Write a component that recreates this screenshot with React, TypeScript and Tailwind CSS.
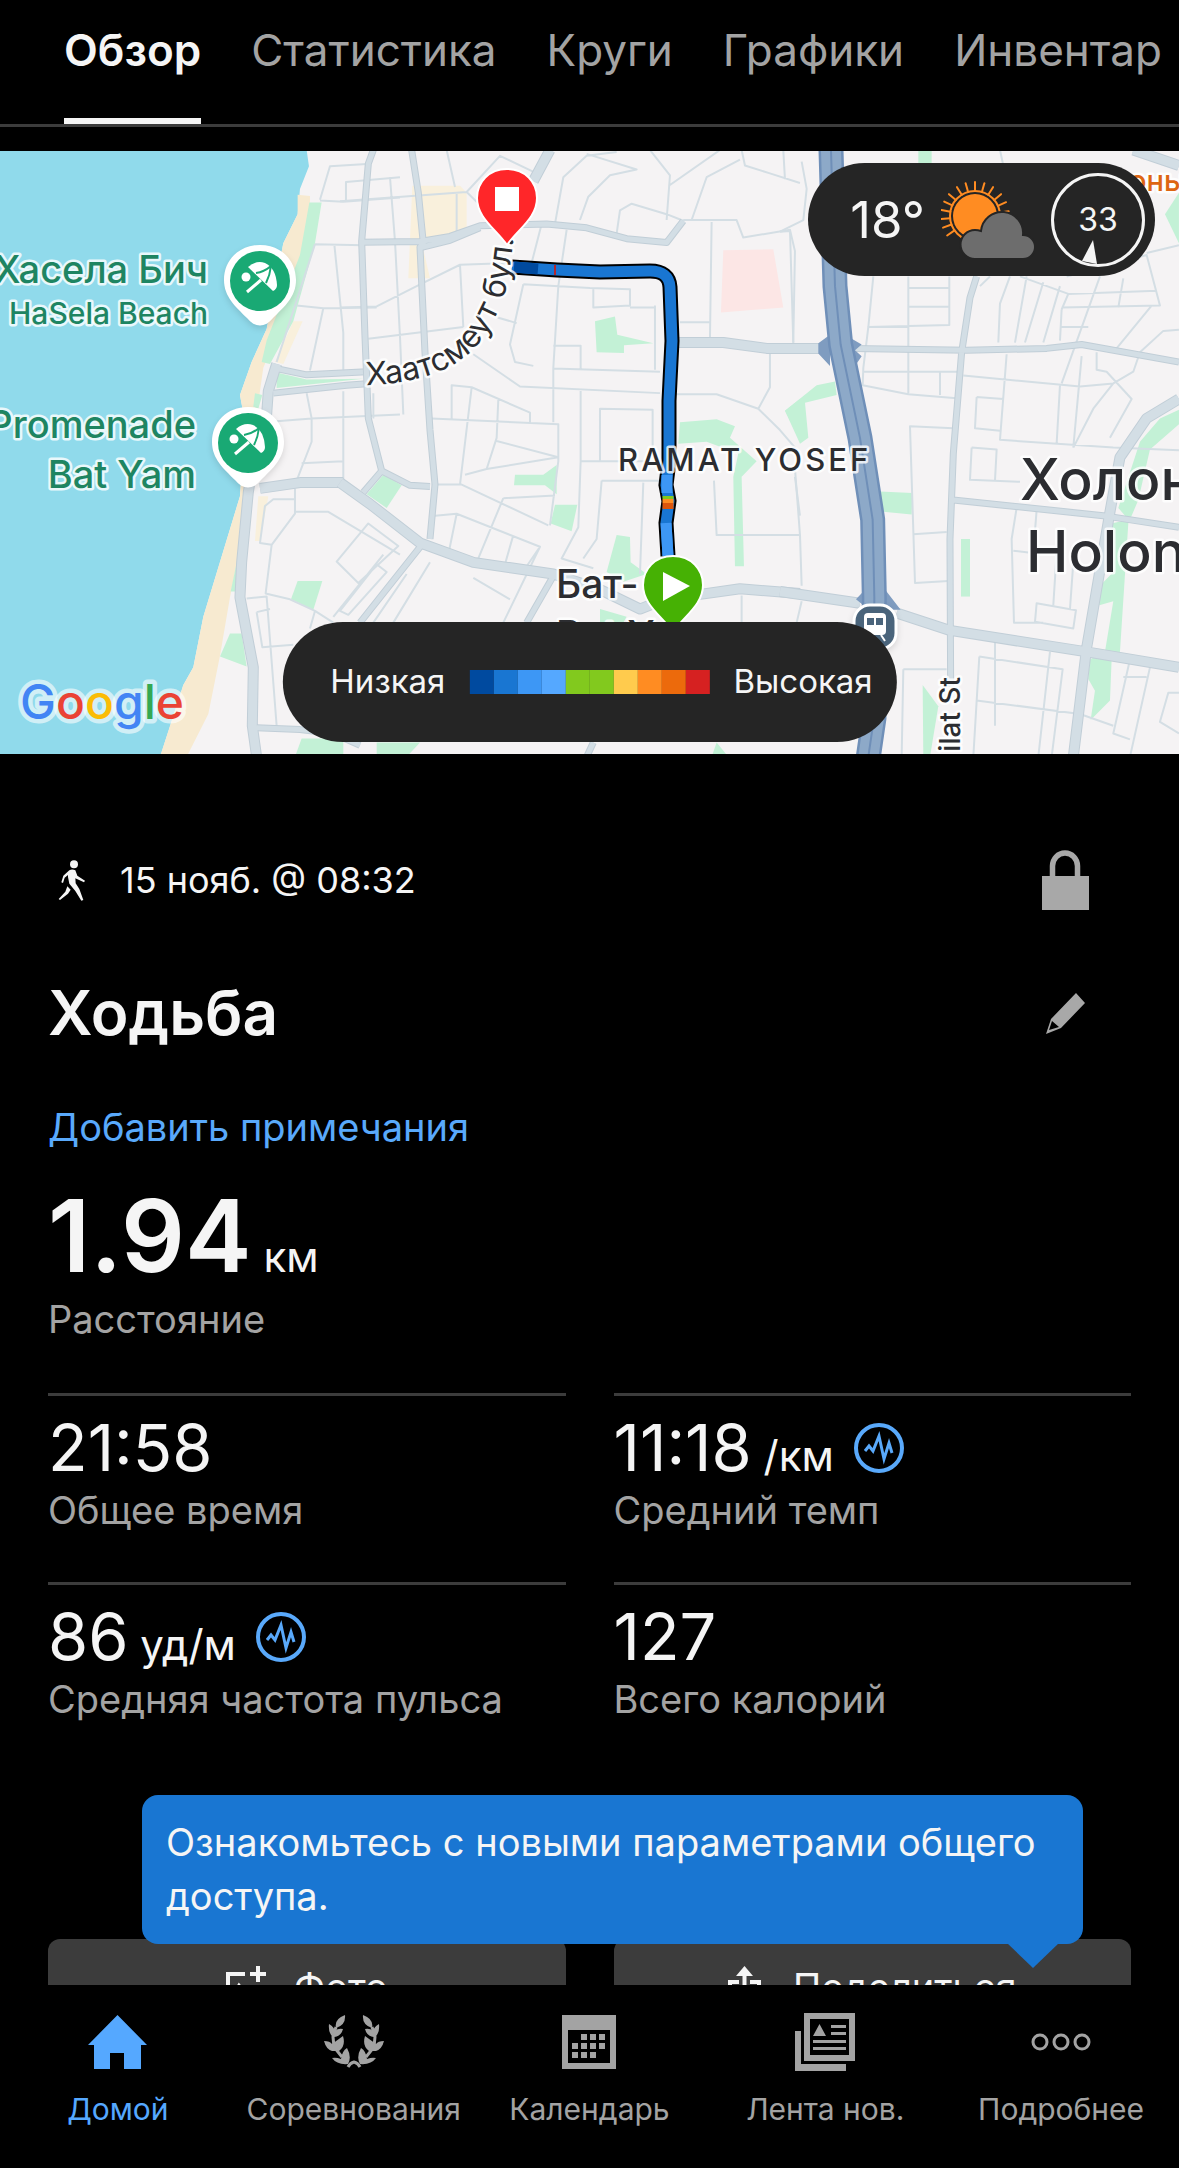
import type { ReactNode } from "react";

const TABS = ["Обзор", "Статистика", "Круги", "Графики", "Инвентар"];

const ZONES = [
  "bg-[#004a9f]",
  "bg-[#1976d2]",
  "bg-[#3d97f5]",
  "bg-[#55a8ff]",
  "bg-[#82c91e]",
  "bg-[#82c91e]",
  "bg-[#ffcb4d]",
  "bg-[#ff8c22]",
  "bg-[#ec6a0c]",
  "bg-[#d62121]",
];

/* ---------- Map drawing ---------- */

type TileProps = {
  x: number;
  fills: [string, string][];
  minor: string;
  major: string;
  wide?: string;
};

function Tile({ x, fills, minor, major, wide }: TileProps) {
  return (
    <g
      transform={`translate(${x} -1) scale(0.3333 0.389)`}
      fill="none"
      strokeLinejoin="round"
    >
      {fills.map(([color, points], i) => (
        <polygon key={i} points={points} fill={color} />
      ))}
      <path d={minor} stroke="#d4dee4" strokeWidth="2" vectorEffect="non-scaling-stroke" />
      <path d={major} stroke="#c1ced7" strokeWidth="7" vectorEffect="non-scaling-stroke" />
      {wide && <path d={wide} stroke="#c1ced7" strokeWidth="11" vectorEffect="non-scaling-stroke" />}
      <path d={major} stroke="#d3dee5" strokeWidth="5" vectorEffect="non-scaling-stroke" />
      {wide && <path d={wide} stroke="#d3dee5" strokeWidth="9" vectorEffect="non-scaling-stroke" />}
    </g>
  );
}

const WATER = "#90daeb";
const SAND = "#f7ead0";
const GREEN = "#c3f1d6";
const YELLOW = "#f9f0dc";

const COAST: TileProps = {
  x: 0,
  fills: [
    [WATER, "0,0 920,0 927,42 900,100 893,165 850,240 800,460 755,545 720,630 735,700 720,890 610,1200 580,1330 550,1375 483,1553 0,1560"],
    [SAND, "893,115 930,118 930,215 870,400 790,560 775,650 745,860 730,980 690,1150 660,1300 625,1450 560,1560 480,1560 550,1375 580,1330 610,1200 720,890 735,700 720,630 755,545 800,460 850,240 893,165"],
    [YELLOW, "880,440 908,440 850,550 825,545"],
    [YELLOW, "775,890 805,890 780,1005 765,1005"],
    [GREEN, "928,135 965,135 945,240 880,440 810,550 785,545 800,490 900,270"],
    [GREEN, "765,625 787,630 775,665 760,660"],
    [GREEN, "830,572 920,590 1090,588 830,612"],
    [GREEN, "893,1108 967,1108 940,1182 873,1155"],
    [GREEN, "690,1243 725,1243 740,1328 660,1302"],
    [GREEN, "735,880 745,880 705,1135 692,1135 725,1000"],
    [GREEN, "905,1513 1030,1513 1030,1560 885,1560"],
  ],
  minor:
    "M960 128L990 42 1100 36M960 130L1030 133 1200 122M1038 130V82L1200 70M945 242L1090 245M1003 242L1030 470V565M890 400L970 407 1130 405M970 407L930 567M945 242L870 440 830 545M920 625L935 690V750L890 850M830 697L935 690 1200 680M1030 620V850M905 805L1030 800M885 870V935L815 1015 780 1010 795 915 820 898H885M885 930H985L1200 1040M815 1015L797 1140 870 1155 945 1185 1000 1215M1010 1058L1105 960 1195 1018 1075 1113ZM740 1153L800 1148 830 1480M770 1188L810 1180M770 1188L787 1278 880 1272M1000 1200L1150 1040M1020 1185L1130 1065 1160 1085 1045 1195ZM945 1185L930 1230",
  major: "M830 562L920 578 1100 570M820 625L1040 605 1110 600M770 1485L900 1490 1000 1500 1080 1530",
  wide: "M830 550L805 620 800 680 760 800 745 880 725 1060 720 1150 760 1330 757 1480 770 1560M780 870L900 855 1030 855",
};

const CENTER: TileProps = {
  x: 340,
  fills: [
    [YELLOW, "217,92 360,92 380,110 380,215 250,255 270,330 205,330"],
    ["#fce6e5", "1150,258 1300,255 1330,405 1143,418"],
    [GREEN, "765,440 825,428 832,475 940,497 852,502 852,522 770,520"],
    [GREEN, "525,835 610,835 650,810 650,885 615,862 522,862"],
    [GREEN, "645,912 712,912 695,980 632,960"],
    [GREEN, "830,990 870,995 872,1060 920,1090 850,1110 800,1085"],
    [GREEN, "1020,700 1130,692 1185,710 1170,740 1250,800 1205,840 1212,1070 1185,1070 1180,840 1195,780 1100,750 1015,755"],
    [GREEN, "1335,670 1380,640 1380,745"],
    [GREEN, "80,885 130,835 185,862 140,920"],
    [GREEN, "110,1523 240,1523 200,1560 110,1560"],
    [GREEN, "1130,1523 1165,1560 1115,1560"],
    [GREEN, "780,1180 860,1200 850,1215 780,1215"],
  ],
  minor:
    "M0 132L380 108 430 150M380 108L480 15 590 60M150 70L165 235 180 480 190 680M350 108V215M320 0L345 95M645 190L670 70 740 15 830 5M720 180L745 120 810 65 890 50 740 10M930 0L990 65 980 180M990 90L1140 0M1055 180L1100 70 1200 25M1205 0L1215 40 1290 60 1380 85M1330 0L1335 75M830 215L840 155 875 138 980 165 1030 182M1030 180L1190 180 1210 225 1350 205 1365 260 1360 495M1115 185L1110 485M605 190L575 290M680 205L655 350 640 560M550 345L750 355 870 358V400L760 405V355M550 345L510 500 525 545 580 555M640 503H722V562M640 562L960 570M640 560V700M945 400V565M945 405H870M400 525L540 608 960 625M722 615V800M722 800H960M780 800V665L938 668V765M1010 628H1130L1255 665 1320 720 1380 780M1255 665L1290 610V520M1020 443H1110M335 690V605L395 610 570 675V700M275 690L655 705V800L630 965M395 610L360 860M475 640L470 740 440 820 375 835M470 748L655 790 440 820M275 860H365L625 965M285 940L350 935 600 1020 560 1070M490 895L645 888M490 895L410 1060M350 935L325 1040M520 990L490 1080M722 800L715 970 665 1050 760 1075M785 850H960M785 850L770 1000 730 1050M910 855L900 1090M1122 850L1130 990H1380M1205 1145V1215M270 1060L160 1215M400 1100L510 1155M600 1020L490 1215M85 485L370 455M360 295L370 455M0 405L110 402 230 350 360 295 520 290M470 430L530 445M100 690V625M200 1090L100 1215M1365 840L1380 940",
  major:
    "M100 0L85 35 65 235 75 480 85 690 125 825 210 862 270 865M125 825L70 880M215 0L235 110 250 240 240 250 255 520 270 720 285 860 270 1000M65 237L240 235 330 222 420 195 620 190 740 200 860 228 980 238 1030 182M245 250L330 232 420 200M250 1010L60 1215M640 1095L560 1215M760 1523L740 1560",
  wide: "M630 0L580 80M0 855L90 910 240 1010 400 1060 640 1090 780 1130M780 1130L900 1180 960 1160M1010 495L1150 495 1280 510 1380 510M1060 1145L1200 1128 1380 1140",
};

const EAST: TileProps = {
  x: 780,
  fills: [
    [GREEN, "415,0 455,0 455,40 415,40"],
    [GREEN, "15,670 110,605 165,595 170,630 75,650 85,740 60,755"],
    [GREEN, "300,878 397,882 395,937 310,930"],
    [GREEN, "543,1000 570,1000 570,1148 543,1148"],
    [GREEN, "1197,668 1140,690 1080,750 1015,920 1045,950 995,960 1000,1085 960,1120 958,1170 1000,1160 975,1290 930,1310 925,1360 945,1390 932,1465 990,1415 995,1310 1020,1290 1045,960 1075,900 1110,770 1197,705"],
    [GREEN, "1155,165 1197,110 1197,240"],
    [GREEN, "428,1375 475,1430 450,1560 430,1560"],
  ],
  minor:
    "M385 325V625M385 355H508M385 403H508M508 325V450L265 455M280 325L265 455 250 560 248 605 385 628 530 638M250 570H535M480 570V630M600 350L630 325M690 325L660 395 655 495M740 325L705 495M790 340L735 495M840 350L790 495M720 325L865 370 1130 362M960 325L845 600M845 405L1140 400 1100 270 860 325M845 410L840 490M845 455H925M865 370L845 410M1030 330L1015 405M1115 400L1000 520M950 520V565L980 570 1055 640 990 740M550 580L900 608 1000 600 1060 570 1080 520 1150 465 1197 462M905 530L880 765M840 605L830 755M1000 600L940 665 880 765M680 525L660 745 1000 765 1197 772M590 635L670 640M590 635L585 715 660 722M575 765L650 770 645 850M575 765L570 848 720 853M520 715L390 710 405 1113 505 1108M400 988L500 982M710 920L695 1000 702 1215 790 1215M770 925L760 1035M700 1030L745 1035M830 1035L820 1170M770 1165L888 1183 880 1230 765 1213ZM880 1060L870 1180M598 1302L848 1335 815 1560M598 1302L580 1560M645 1265V1480M590 1415L900 1450 1000 1480M810 1290L775 1560M370 1335H500M370 1335L365 1560M1050 1310L1000 1500 1050 1515M1030 1355H1100M1110 1330L1050 1560M1197 1395L1165 1395 1140 1470 1197 1500M60 990L65 1120M45 820L60 990M0 210L30 208 40 500M65 30L80 100 70 180 0 210M65 1160L50 1215M660 0L670 40M1100 265L1197 245",
  major:
    "M220 510L560 515 800 510 905 500 1197 545M590 325L570 380 545 520 520 780 510 1000 512 1380M520 900L970 940 1197 970",
  wide: "M0 510H150M990 930L920 1280 880 1560M990 930L1020 790 1100 690 1197 640M0 1135L240 1165M350 1190L510 1235 920 1290 1197 1330M1060 0L1197 40",
};

const HIGHWAY = "M153 0L165 350 182 500 240 740 278 950 283 1150 282 1460 265 1560";
const ROUTE =
  "M512 116L557 119 600 121 650 120Q669 120 670 136L672 190 669 250 669 310 666 334 669 350 666 372 668 405";

function BeachPin({ x, y }: { x: number; y: number }) {
  return (
    <g transform={`translate(${x} ${y})`}>
      <path
        d="M0 -36C21 -36 36 -21 36 -1C36 16 24 26 13 37C5 47 -5 47 -13 37C-24 26 -36 16 -36 -1C-36 -21 -21 -36 0 -36Z"
        fill="#fff"
        className="drop-shadow-md"
      />
      <circle r="30" fill="#19a974" />
      <circle cx="-14" cy="-4" r="4.500" fill="#fff" />
      <path d="M-12 -14Q-4 -21 5 -18Q16 -13 17 4Q17 8 13 10Z" fill="#fff" />
      <path d="M-13 11L1 -1" stroke="#fff" strokeWidth="3" />
      <path d="M-4 -8Q4 -9 11 -15Q10 -6 6 2" fill="none" stroke="#19a974" strokeWidth="2" />
    </g>
  );
}

function RoutePin({ x, y, color, children }: { x: number; y: number; color: string; children: ReactNode }) {
  return (
    <g transform={`translate(${x} ${y})`}>
      <path
        d="M0 -30C18 -30 30 -17 30 -1C30 19 11 30 0 46C-11 30 -30 19 -30 -1C-30 -17 -18 -30 0 -30Z"
        fill={color}
        stroke="#fff"
        strokeWidth="2"
      />
      {children}
    </g>
  );
}

const halo = "[paint-order:stroke] stroke-white/80 stroke-[5px] [stroke-linejoin:round]";

function RouteMap() {
  return (
    <svg
      viewBox="0 0 1179 603"
      preserveAspectRatio="xMidYMid slice"
      className="block w-full font-[Inter,sans-serif]"
      role="img"
      aria-label="Карта маршрута"
    >
      <rect width="1179" height="603" fill="#f5f3f4" />
      <Tile {...COAST} />
      <Tile {...CENTER} />
      <Tile {...EAST} />
      <g transform="translate(780 -1) scale(0.3333 0.389)" fill="none">
        <path
          d="M115 497L150 475V555L115 523ZM205 480L245 500L225 515L245 530L225 555L205 540ZM228 1155L250 1135V1170ZM315 1130L362 1182H310Z"
          fill="#7f9cc0"
        />
        <path d={HIGHWAY} stroke="#6f8fb8" strokeWidth="25" vectorEffect="non-scaling-stroke" />
        <path d={HIGHWAY} stroke="#8da9c8" strokeWidth="20" vectorEffect="non-scaling-stroke" />
        <path d={HIGHWAY} stroke="#6f8fb8" strokeWidth="2" vectorEffect="non-scaling-stroke" />
      </g>

      <g fill="none">
        <path d={ROUTE} stroke="#000" strokeWidth="15" />
        <path d={ROUTE} stroke="#1976d2" strokeWidth="11" />
        <path d="M514 116L538 118" stroke="#004a9f" strokeWidth="11" />
        <path d="M555 114v10" stroke="#b3262e" strokeWidth="2" />
        <path d="M666 372L668 405M667 324L667 342" stroke="#3d97f5" strokeWidth="11" />
        <path d="M668 345v3" stroke="#82c91e" strokeWidth="11" />
        <path d="M668 348v4" stroke="#ff8c22" strokeWidth="11" />
        <path d="M668 352v6" stroke="#dd560c" strokeWidth="11" />
      </g>

      <g fill="#1e8562" fontWeight="500" textAnchor="end" className={halo}>
        <text x="208" y="132" fontSize="38">Хасела Бич</text>
        <text x="208" y="173" fontSize="30">HaSela Beach</text>
        <text x="196" y="287" fontSize="38">Promenade</text>
        <text x="196" y="337" fontSize="38">Bat Yam</text>
      </g>

      <g fill="#2c2d31" className={halo}>
        <path id="street" d="M366 234C432 232 470 212 490 176S508 128 516 70" fill="none" stroke="none" />
        <text fontSize="32"><textPath href="#street">Хаатсмеут бул.</textPath></text>
        <text x="618" y="320" fontSize="31" fontWeight="500" className="tracking-widest">RAMAT YOSEF</text>
        <text x="556" y="447" fontSize="39" fontWeight="500">Бат-</text>
        <text x="556" y="498" fontSize="39" fontWeight="500">Bat Yam</text>
        <text x="1020" y="349" fontSize="57" fontWeight="500">Холон</text>
        <text x="1026" y="421" fontSize="57" fontWeight="500">Holon</text>
        <text transform="translate(960 526) rotate(-90)" textAnchor="end" fontSize="28" fontWeight="500">ilat St</text>
      </g>
      <text x="1129" y="40" fontSize="29" fontWeight="500" fill="#dd6512" className={halo}>оны</text>

      <BeachPin x={260} y={130} />
      <BeachPin x={248} y={292} />

      <RoutePin x={507} y={48} color="#ff2629">
        <rect x="-12" y="-12" width="24" height="24" fill="#fff" />
      </RoutePin>
      <RoutePin x={673} y={435} color="#46b104">
        <path d="M-10 -14V15L17 0Z" fill="#fff" />
      </RoutePin>

      <g transform="translate(875 474)">
        <rect x="-21" y="-20" width="42" height="44" rx="16" fill="#4a647b" stroke="#fff" strokeWidth="3" className="drop-shadow-md" />
        <rect x="-11" y="-12" width="22" height="22" rx="4" fill="#fff" />
        <path d="M-8 -7h7v7h-7zM1 -7h7v7h-7z" fill="#4a647b" />
        <path d="M-6 10L-10 16M6 10L10 16" stroke="#fff" strokeWidth="2" />
      </g>

      <g fontSize="48" fontWeight="500" className="[paint-order:stroke] stroke-white/60 stroke-[9px] [stroke-linejoin:round]">
        <text x="20" y="568">
          <tspan fill="#4285f4">G</tspan>
          <tspan fill="#ea4335">o</tspan>
          <tspan fill="#fbbc05">o</tspan>
          <tspan fill="#4285f4">g</tspan>
          <tspan fill="#34a853">l</tspan>
          <tspan fill="#ea4335">e</tspan>
        </text>
      </g>
    </svg>
  );
}

/* ---------- Icons ---------- */

const RAYS = [-200, -185, -170, -155, -140, -122, -106, -90, -74, -58, -40, -24, -8, 145];

function WeatherIcon() {
  return (
    <svg width="94" height="78" viewBox="0 0 94 78" aria-hidden="true">
      <g stroke="#ff8c22" strokeWidth="2" strokeLinecap="round">
        {RAYS.map((a) => (
          <path key={a} d="M25 0H34" transform={`translate(34 35) rotate(${a})`} />
        ))}
        <circle cx="34" cy="35" r="25" fill="none" />
      </g>
      <circle cx="34" cy="35" r="22" fill="#ff8c22" />
      <path
        d="M34 78A14 14 0 0 1 34 49Q37 49 40 50A21 21 0 0 1 82 54A12 12 0 0 1 82 78Z"
        fill="#6d6d6d"
        stroke="#252525"
        strokeWidth="2"
      />
    </svg>
  );
}

function WalkIcon() {
  return (
    <svg width="28" height="42" viewBox="54 40 84 126" fill="#f5f5f5" aria-hidden="true">
      <circle cx="102" cy="56" r="12" />
      <path d="M88 74Q96 69 106 74L112 90L135 105L132 110L106 98L107 113L118 130L130 163L124 165L106 136L88 114L84 94L84 88L74 96L69 112L64 110L70 90Z" />
      <path d="M82 122L92 132L84 144L60 163L56 160L76 138Z" />
    </svg>
  );
}

function LockIcon() {
  return (
    <svg width="47" height="60" viewBox="0 0 47 60" aria-hidden="true">
      <rect y="26" width="47" height="34" fill="#a8a8a8" />
      <path d="M10.500 28V16a12.500 13 0 0 1 25 0V28" fill="none" stroke="#a8a8a8" strokeWidth="5.500" />
    </svg>
  );
}

function PencilIcon() {
  return (
    <svg width="39" height="41" viewBox="0 0 39 41" aria-hidden="true">
      <path d="M30 0L39 10L15 35L0 41L5 26ZM6 28L3 37L13 34Z" fill="#a8a8a8" fillRule="evenodd" />
    </svg>
  );
}

function PulseIcon() {
  return (
    <svg width="50" height="50" viewBox="0 0 50 50" fill="none" stroke="#59a9fb" aria-hidden="true">
      <circle cx="25" cy="25" r="23" strokeWidth="4" />
      <path d="M11 28L15 23L19 28L25 13L30 36L35 20L38 30" strokeWidth="3" />
    </svg>
  );
}

function PhotoIcon() {
  return (
    <svg width="40" height="42" viewBox="0 0 40 42" fill="none" stroke="#f5f5f5" strokeWidth="4" aria-hidden="true">
      <path d="M19 8H2V40H34V24M32 0V16M24 8H40M4 34L13 20L21 30L25 26L33 36" />
    </svg>
  );
}

function ShareIcon() {
  return (
    <svg width="33" height="42" viewBox="0 0 33 42" fill="none" stroke="#f5f5f5" strokeWidth="4" aria-hidden="true">
      <path d="M11 16H2V40H31V16H22M16.500 30V6" />
      <path d="M16.500 0L25 10H8Z" fill="#f5f5f5" stroke="none" />
    </svg>
  );
}

function HomeIcon() {
  return (
    <svg width="59" height="54" viewBox="0 0 59 54" fill="currentColor" aria-hidden="true">
      <path d="M29.500 0L59 30H53V54H36V38H22V54H6V30H0Z" />
    </svg>
  );
}

const LAUREL =
  "M21 0Q22 10 12 13Q10 4 21 0ZM5 9Q10 12 11 16Q14 13 19 14Q17 22 9 22Q4 18 5 9ZM0 26Q6 26 8 29L19 21Q22 31 15 36H8Q2 34 0 26ZM23 33Q28 42 24 49Q13 50 8 43Q12 42 17 44Q18 36 23 33Z";

function LaurelIcon() {
  return (
    <svg width="60" height="54" viewBox="0 0 60 54" fill="currentColor" aria-hidden="true">
      <path d={LAUREL} />
      <path d={LAUREL} transform="matrix(-1 0 0 1 60 0)" />
      <path
        d="M12 12L9 22L10 32L18 42M48 12L51 22L50 32L42 42M24 52Q26 48 30 47Q34 48 36 52"
        fill="none"
        stroke="currentColor"
        strokeWidth="3"
      />
    </svg>
  );
}

function CalendarIcon() {
  return (
    <svg width="54" height="54" viewBox="0 0 54 54" fill="currentColor" aria-hidden="true">
      <path d="M0 0H54V54H0ZM6 15V48H48V15Z" fillRule="evenodd" />
      <path d="M19 19h6v6h-6zM28 19h6v6h-6zM37 19h6v6h-6zM10 28h6v6h-6zM19 28h6v6h-6zM28 28h6v6h-6zM37 28h6v6h-6zM10 37h6v6h-6zM19 37h6v6h-6zM28 37h6v6h-6z" />
    </svg>
  );
}

function NewsIcon() {
  return (
    <svg width="60" height="58" viewBox="0 0 60 58" fill="currentColor" aria-hidden="true">
      <path d="M9 0H60V48H9ZM15 6V42H54V6Z" fillRule="evenodd" />
      <path d="M0 18H6V51H51V58H0ZM24.500 11L31 23H18ZM36 12H51V15H36ZM36 19H51V22H36ZM18 27H51V30H18ZM18 34H51V37H18Z" />
    </svg>
  );
}

function MoreIcon() {
  return (
    <svg width="60" height="18" viewBox="0 0 60 18" fill="none" stroke="currentColor" strokeWidth="3" aria-hidden="true">
      <circle cx="9" cy="9" r="7" />
      <circle cx="30" cy="9" r="7" />
      <circle cx="51" cy="9" r="7" />
    </svg>
  );
}

/* ---------- Page ---------- */

function Stat({ value, unit, label, pulse }: { value: string; unit?: string; label: string; pulse?: boolean }) {
  return (
    <div className="border-t-[3px] border-[#3c3c3c] pt-5">
      <div className="flex h-16 items-center gap-5">
        <p className="text-[65px] leading-[64px] whitespace-nowrap">
          {value}
          {unit && <span className="text-[42px] leading-none"> {unit}</span>}
        </p>
        {pulse && <PulseIcon />}
      </div>
      <p className="mt-1.5 text-[38px] leading-[48px] text-[#a3a3a3]">{label}</p>
    </div>
  );
}

const NAV = [
  { label: "Домой", icon: <HomeIcon />, active: true },
  { label: "Соревнования", icon: <LaurelIcon /> },
  { label: "Календарь", icon: <CalendarIcon /> },
  { label: "Лента нов.", icon: <NewsIcon /> },
  { label: "Подробнее", icon: <MoreIcon /> },
];

export default function App() {
  return (
    <div className="flex h-screen flex-col overflow-hidden bg-black font-[Inter,sans-serif] text-[#f5f5f5]">
      <nav className="flex shrink-0 gap-[50px] overflow-hidden border-b-[3px] border-[#3c3c3c] pl-16">
        {TABS.map((tab, i) => (
          <a
            key={tab}
            href="#"
            aria-current={i === 0 ? "page" : undefined}
            className={
              i === 0
                ? "h-[124px] border-b-[6px] border-[#f5f5f5] pt-6 text-[44px] leading-[52px] font-semibold"
                : "h-[124px] pt-6 text-[44px] leading-[52px] text-[#a3a3a3]"
            }
          >
            {tab}
          </a>
        ))}
      </nav>

      <main className="min-h-0 flex-1 overflow-y-auto pt-6 [scrollbar-width:none]">
        <div className="relative">
          <RouteMap />
          <div className="absolute top-3 right-6 flex h-[113px] items-center gap-4 rounded-full bg-[#252525] pr-2.5 pl-[42px]">
            <span className="text-[51px] leading-none">18°</span>
            <WeatherIcon />
            <div className="relative flex size-[94px] items-center justify-center rounded-full border-[3px] border-[#f5f5f5] text-[32px]">
              33
              <svg width="16" height="24" viewBox="0 0 16 24" className="absolute bottom-0 left-7" aria-hidden="true">
                <path d="M11 0L15 24L0 21Z" fill="#f5f5f5" />
              </svg>
            </div>
          </div>
          <div className="absolute bottom-3 left-1/2 flex h-[120px] -translate-x-1/2 items-center gap-6 rounded-full bg-[#252525] pr-6 pl-12 text-[33px] whitespace-nowrap">
            <span>Низкая</span>
            <div className="flex h-6">
              {ZONES.map((c, i) => (
                <span key={i} className={`w-6 ${c}`} />
              ))}
            </div>
            <span>Высокая</span>
          </div>
        </div>

        <div className="px-12 pt-24">
          <div className="flex h-[60px] items-center pr-[42px] pl-2.5">
            <WalkIcon />
            <time className="ml-[34px] text-[36px]">15 нояб. @ 08:32</time>
            <button type="button" aria-label="Конфиденциальность" className="ml-auto">
              <LockIcon />
            </button>
          </div>

          <div className="mt-[71px] flex h-16 items-center justify-between pr-[46px]">
            <h1 className="text-[62px] leading-[64px] font-semibold">Ходьба</h1>
            <button type="button" aria-label="Изменить название">
              <PencilIcon />
            </button>
          </div>

          <a href="#" className="mt-[58px] block w-fit text-[38px] leading-[48px] text-[#59a9fb]">
            Добавить примечания
          </a>

          <p className="mt-9 text-[100px] leading-[98px] font-semibold">
            1.94<span className="text-[42px] leading-none font-normal"> км</span>
          </p>
          <p className="mt-2.5 text-[38px] leading-[48px] text-[#a3a3a3]">Расстояние</p>

          <div className="mt-[50px] grid grid-cols-2 gap-12">
            <Stat value="21:58" label="Общее время" />
            <Stat value="11:18" unit="/км" label="Средний темп" pulse />
            <Stat value="86" unit="уд/м" label="Средняя частота пульса" pulse />
            <Stat value="127" label="Всего калорий" />
          </div>

          <div className="relative mt-[216px] grid grid-cols-2 gap-12">
            <button type="button" className="flex h-24 items-center justify-center gap-7 rounded-xl bg-[#3c3c3c] text-[38px]">
              <PhotoIcon />
              Фото
            </button>
            <button type="button" className="flex h-24 items-center justify-center gap-8 rounded-xl bg-[#3c3c3c] text-[38px]">
              <ShareIcon />
              Поделиться
            </button>
            <div
              role="tooltip"
              className="absolute -top-36 right-12 left-[94px] rounded-2xl bg-[#1976d2] px-6 pt-5 pb-[21px] text-[38px] leading-[54px]"
            >
              Ознакомьтесь с новыми параметрами общего доступа.
              <svg width="52" height="25" viewBox="0 0 52 25" className="absolute top-full right-6 -mt-px" aria-hidden="true">
                <path d="M0 0H52L26 25Z" fill="#1976d2" />
              </svg>
            </div>
          </div>
        </div>
      </main>

      <nav className="grid h-[183px] shrink-0 grid-cols-5 bg-black pt-6">
        {NAV.map(({ label, icon, active }) => (
          <a
            key={label}
            href="#"
            aria-current={active ? "page" : undefined}
            className={
              active
                ? "flex flex-col items-center text-[30px] leading-10 text-[#55a8ff]"
                : "flex flex-col items-center text-[30px] leading-10 whitespace-nowrap text-[#a3a3a3]"
            }
          >
            <span className="flex h-[66px] items-center">{icon}</span>
            <span className="mt-[14px]">{label}</span>
          </a>
        ))}
      </nav>
    </div>
  );
}
